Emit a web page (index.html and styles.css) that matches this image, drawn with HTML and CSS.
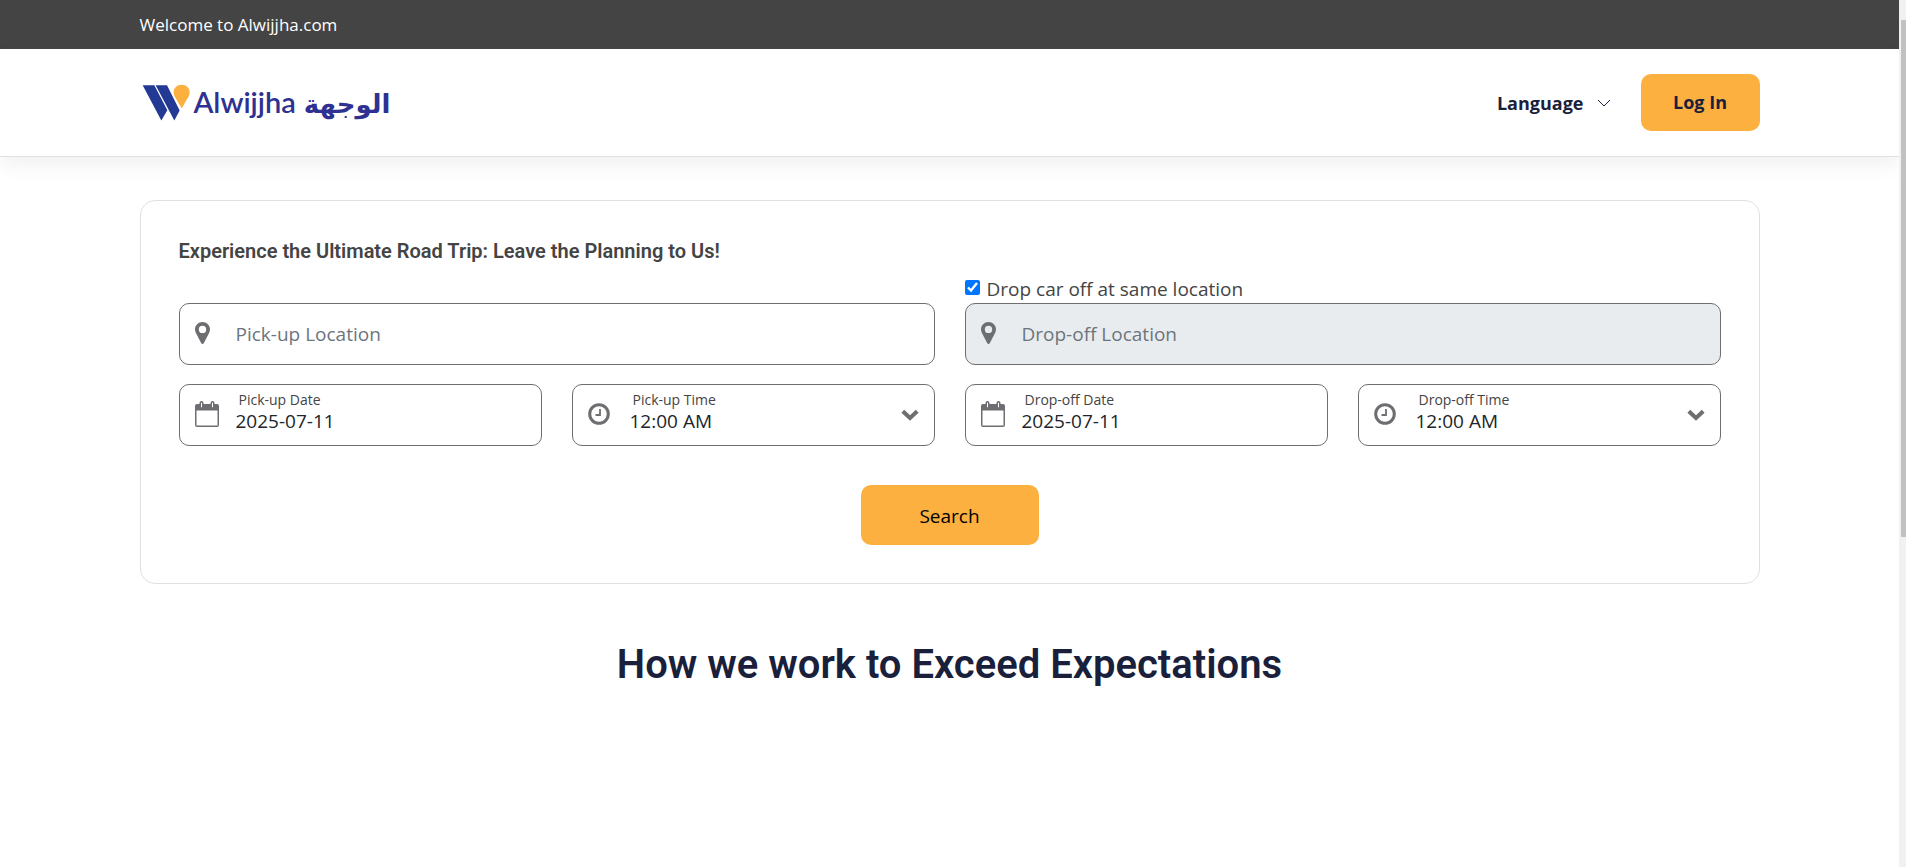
FILE: index.html
```
<!DOCTYPE html>
<html lang="en">

<head>
    <meta charset="UTF-8">
    <meta name="viewport" content="width=device-width, initial-scale=1.0">
    <title>Alwijjha</title>
    <link rel="stylesheet" href="styles.css">
</head>

<body>
    <!-- icons -->
    <svg class="sprite" aria-hidden="true">
        <symbol id="pin" viewBox="0 0 15 22">
            <path fill-rule="evenodd" d="M7.500 0C3.300 0 0 3.300 0 7.300c0 1.400.3 2.400.8 3.400l5.300 10.400c.6 1.200 2.200 1.200 2.800 0l5.300-10.400c.5-1 .8-2 .8-3.400C15 3.300 11.700 0 7.500 0zm0 3.700a3.700 3.700 0 1 1 0 7.400 3.700 3.700 0 0 1 0-7.400z" />
        </symbol>
        <symbol id="calendar" viewBox="0 0 24 26">
            <path fill-rule="evenodd" d="M2 3h2.500V2a2 2 0 0 1 4 0v1h7V2a2 2 0 0 1 4 0v1H22a2 2 0 0 1 2 2v19a2 2 0 0 1-2 2H2a2 2 0 0 1-2-2V5a2 2 0 0 1 2-2zm-.5 6.500v14.500a.5.5 0 0 0 .5.500h20a.5.500 0 0 0 .5-.500V9.500zM6 1.700v4.600h1V1.700zm11 0v4.600h1V1.700z" />
        </symbol>
        <symbol id="clock" viewBox="0 0 22 22">
            <circle cx="11" cy="11" r="9.300" fill="none" stroke="currentColor" stroke-width="3" />
            <path d="M12 6v6H7.500" fill="none" stroke="currentColor" stroke-width="1.800" />
        </symbol>
        <symbol id="arrow" viewBox="0 0 18 12">
            <path d="M1.800 2.200L9 9l7.200-6.800" fill="none" stroke="currentColor" stroke-width="4" />
        </symbol>
    </svg>

    <div class="topbar">
        <div class="container">Welcome to Alwijjha.com</div>
    </div>

    <header class="header">
        <div class="container header-inner">
            <a class="logo" href="#">
                <svg class="logo-mark" viewBox="66 252 144 110" aria-hidden="true">
                    <path fill="#233a94" d="M68 255h35l39 75-18 31zM107 255h34l38 76-16 30z" />
                    <path fill="#fbb040" d="M185 254c-14 0-24 10-24 23 0 9 4 14 9 22l15 26 15-26c5-8 9-13 9-22 0-13-10-23-24-23z" />
                </svg>
                <span class="logo-latin">Alwijjha</span>
                <span class="logo-arabic" lang="ar">الوجهة</span>
            </a>
            <nav class="nav">
                <button class="language" type="button">Language
                    <svg class="chevron" viewBox="0 0 14 8" aria-hidden="true">
                        <path d="M1 1l6 6 6-6" fill="none" stroke="currentColor" />
                    </svg>
                </button>
                <a class="login" href="#">Log In</a>
            </nav>
        </div>
    </header>

    <main class="container">
        <form class="booking">
            <h1>Experience the Ultimate Road Trip: Leave the Planning to Us!</h1>
            <div class="locations">
                <div class="field">
                    <svg class="icon icon-pin" aria-hidden="true"><use href="#pin" /></svg>
                    <input type="text" id="pickup" placeholder="Pick-up Location" aria-label="Pick-up Location">
                </div>
                <div>
                    <div class="same">
                        <input type="checkbox" id="same" checked>
                        <label for="same">Drop car off at same location</label>
                    </div>
                    <div class="field disabled">
                        <svg class="icon icon-pin" aria-hidden="true"><use href="#pin" /></svg>
                        <input type="text" id="dropoff" placeholder="Drop-off Location" aria-label="Drop-off Location" disabled>
                    </div>
                </div>
            </div>
            <div class="dates">
                <div class="field">
                    <svg class="icon icon-calendar" aria-hidden="true"><use href="#calendar" /></svg>
                    <div class="stack">
                        <label for="pickupDate">Pick-up Date</label>
                        <input type="text" id="pickupDate" value="2025-07-11">
                    </div>
                </div>
                <div class="field">
                    <svg class="icon icon-clock" aria-hidden="true"><use href="#clock" /></svg>
                    <div class="stack">
                        <label for="pickupTime">Pick-up Time</label>
                        <select id="pickupTime">
                            <option>12:00 AM</option>
                            <option>12:30 AM</option>
                            <option>01:00 AM</option>
                        </select>
                    </div>
                    <svg class="arrow" aria-hidden="true"><use href="#arrow" /></svg>
                </div>
                <div class="field">
                    <svg class="icon icon-calendar" aria-hidden="true"><use href="#calendar" /></svg>
                    <div class="stack">
                        <label for="dropoffDate">Drop-off Date</label>
                        <input type="text" id="dropoffDate" value="2025-07-11">
                    </div>
                </div>
                <div class="field">
                    <svg class="icon icon-clock" aria-hidden="true"><use href="#clock" /></svg>
                    <div class="stack">
                        <label for="dropoffTime">Drop-off Time</label>
                        <select id="dropoffTime">
                            <option>12:00 AM</option>
                            <option>12:30 AM</option>
                            <option>01:00 AM</option>
                        </select>
                    </div>
                    <svg class="arrow" aria-hidden="true"><use href="#arrow" /></svg>
                </div>
            </div>
            <button class="search" type="submit">Search</button>
        </form>

        <h2>How we work to Exceed Expectations</h2>
    </main>

    <div class="scrollbar" aria-hidden="true">
        <div class="thumb"></div>
    </div>
</body>

</html>
```
FILE: styles.css
```
* {
    box-sizing: border-box;
}

body {
    margin: 0;
    padding-right: 7px;
    font-family: "Open Sans", "Noto Sans", sans-serif;
    font-size: 19px;
    color: #444;
    background-color: #fff;
}

.sprite {
    display: none;
}

.container {
    width: calc(100% - 40px);
    max-width: 1620px;
    margin: 0 auto;
}

/* top bar */
.topbar {
    background-color: #444;
    color: #fff;
    font-size: 17px;
    line-height: 49px;
}

/* header */
.header {
    padding: 25px 0;
    border-bottom: 1px solid #dee0e2;
    box-shadow: 0 8px 20px rgba(0, 0, 0, 0.06);
}

.header-inner {
    display: flex;
    align-items: center;
    justify-content: space-between;
}

.logo {
    display: flex;
    align-items: center;
    padding-left: 2px;
    color: #2e3192;
    text-decoration: none;
}

.logo-mark {
    width: 48px;
    height: 37px;
}

.logo-latin {
    margin-left: 4px;
    padding-bottom: 2px;
    font-family: Lato, sans-serif;
    font-size: 29px;
    line-height: 36px;
    font-weight: 600;
}

.logo-arabic {
    margin-left: 8px;
    padding-top: 3px;
    font-family: "DejaVu Sans", sans-serif;
    font-size: 26px;
    line-height: 36px;
    font-weight: bold;
}

.nav {
    display: flex;
    align-items: center;
    gap: 30px;
    font-size: 18px;
    font-weight: 700;
    color: #1a1f3c;
}

.language {
    display: flex;
    align-items: center;
    gap: 13px;
    padding: 0;
    border: none;
    background: none;
    font: inherit;
    color: inherit;
    cursor: pointer;
}

.chevron {
    width: 14px;
    height: 8px;
}

.login {
    width: 119px;
    border-radius: 10px;
    background-color: #fbb040;
    color: inherit;
    line-height: 57px;
    text-align: center;
    text-decoration: none;
}

/* booking form */
.booking {
    margin-top: 43px;
    padding: 38px;
    border: 1px solid #dee0e2;
    border-radius: 15px;
}

h1 {
    margin: 0 0 13px;
    font-family: Roboto, sans-serif;
    font-size: 20px;
    line-height: 24px;
    font-weight: 600;
}

.locations {
    display: grid;
    grid-template-columns: 1fr 1fr;
    align-items: end;
    gap: 30px;
}

.dates {
    display: grid;
    grid-template-columns: repeat(4, 1fr);
    gap: 30px;
    margin-top: 19px;
}

.same {
    display: flex;
    gap: 7px;
    line-height: 27px;
}

.same input {
    width: 15px;
    height: 15px;
    margin: 4px 0 0;
    accent-color: #0075ff;
}

.field {
    display: flex;
    align-items: center;
    height: 62px;
    padding: 0 15px;
    border: 1px solid #6d6e71;
    border-radius: 10px;
    color: #6d6e71;
}

.disabled {
    background-color: #e9ecef;
}

.field input,
.field select {
    width: 100%;
    min-width: 0;
    padding: 0;
    border: none;
    outline: none;
    appearance: none;
    background: transparent;
    font: inherit;
    line-height: 24px;
    color: #212529;
}

.field input::placeholder {
    color: #6c757d;
}

.icon {
    flex: none;
    margin-bottom: 2px;
    fill: currentColor;
}

.icon-pin {
    width: 15px;
    height: 22px;
    margin-right: 26px;
}

.icon-calendar {
    width: 24px;
    height: 26px;
    margin-right: 17px;
}

.icon-clock {
    width: 22px;
    height: 22px;
    margin-right: 20px;
}

.stack {
    flex: 1;
    padding-bottom: 6px;
}

.stack label {
    display: block;
    padding-left: 3px;
    font-size: 14px;
    line-height: 18px;
    color: #444;
}

.stack input,
.stack select {
    display: block;
    height: 24px;
}

.arrow {
    width: 18px;
    height: 12px;
    pointer-events: none;
}

.search {
    display: block;
    width: 178px;
    height: 60px;
    margin: 39px auto 0;
    padding: 2px 0 0;
    border: none;
    border-radius: 10px;
    background-color: #fbb040;
    font: inherit;
    color: #000;
    cursor: pointer;
}

h2 {
    margin: 57px 0 0;
    font-family: Roboto, sans-serif;
    font-size: 40px;
    line-height: 48px;
    font-weight: 600;
    text-align: center;
    color: #1a1f3c;
}

/* scrollbar */
.scrollbar {
    position: fixed;
    top: 0;
    right: 0;
    bottom: 0;
    width: 7px;
    padding: 20px 0 0 2px;
    background-color: #f1f1f1;
}

.thumb {
    height: 61%;
    background-color: #c1c1c1;
}
```
